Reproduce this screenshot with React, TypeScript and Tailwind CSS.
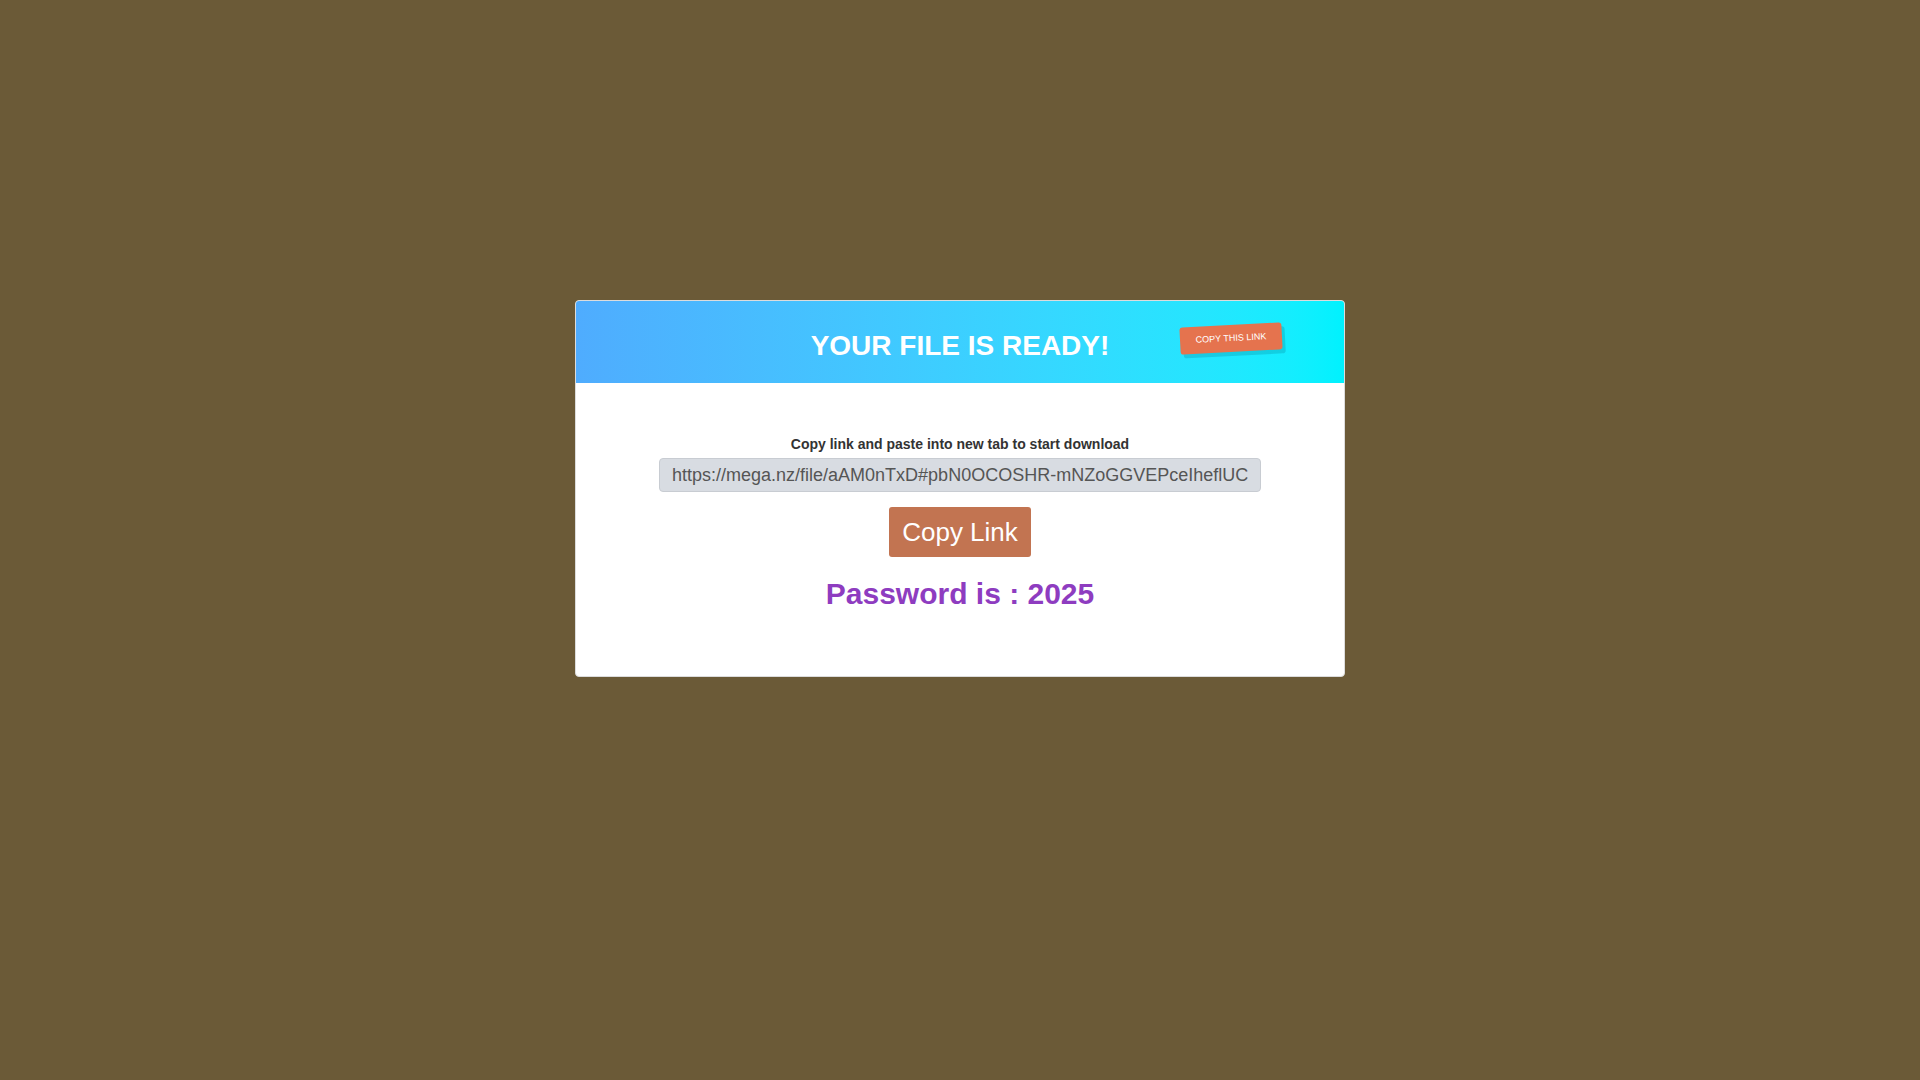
export default function App() {
  const link = 'https://mega.nz/file/aAM0nTxD#pbN0OCOSHR-mNZoGGVEPceIheflUCnQ8wRk2dYs';
  return (
    <div className="min-h-screen bg-[#6b5a37] flex justify-center pt-[300px] font-['Liberation_Sans',Arial,sans-serif]">
      <div className="w-[770px] h-[377px] bg-white border border-[#dcdcdc] rounded-[4px] overflow-hidden flex flex-col">
        <div className="relative h-[82px] shrink-0 pt-[8px] bg-gradient-to-r from-[#4facfe] to-[#00f2fe] flex items-center justify-center">
          <h1 className="text-white font-bold text-[28px] leading-none">YOUR FILE IS READY!</h1>
          <div className="absolute left-[604px] top-[24px] w-[102px] h-[27px] -rotate-3 bg-[#e5734e] rounded-[3px] shadow-[3px_4px_0_rgba(0,120,140,0.25)] flex items-center justify-center text-white text-[9px] uppercase">
            Copy this link
          </div>
        </div>
        <div className="flex flex-col items-center pt-[51px]">
          <p className="text-[#333] font-bold text-[14px] leading-[20px]">
            Copy link and paste into new tab to start download
          </p>
          <input
            readOnly
            value={link}
            className="mt-[4px] w-[602px] h-[34px] px-[12px] bg-[#d8dce2] border border-[#c8ccd2] rounded-[4px] text-[#555] text-[18px] outline-none"
          />
          <button className="mt-[15px] h-[50px] px-[13px] bg-[#c27451] text-white text-[26px] rounded-[3px]">
            Copy Link
          </button>
          <p className="mt-[19px] text-[#8e3cc0] font-bold text-[30px] leading-[36px]">Password is : 2025</p>
        </div>
      </div>
    </div>
  );
}
